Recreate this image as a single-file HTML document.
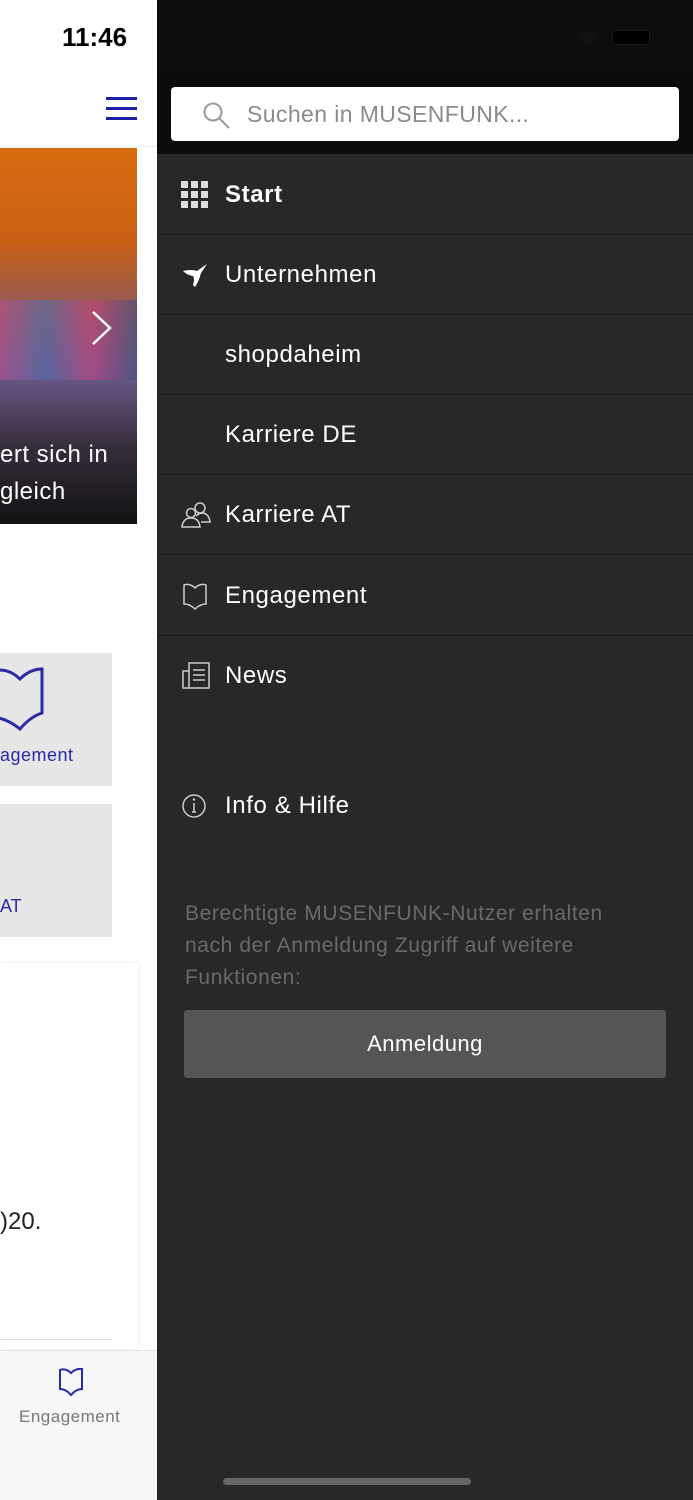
<!DOCTYPE html>
<html><head><meta charset="utf-8"><style>
*{margin:0;padding:0;box-sizing:border-box}
body{width:693px;height:1500px;position:relative;overflow:hidden;font-family:"Liberation Sans",sans-serif;background:#fff}
.a{position:absolute}
.row{position:absolute;left:157px;width:536px;height:80px;border-bottom:1px solid #1a1a1a;color:#fff;font-size:24px;line-height:80px;padding-left:68px;letter-spacing:.6px}
.ic{position:absolute;left:24px;top:26px}
</style></head><body>
<div class="a" style="left:0;top:0;width:157px;height:147px;background:#fff;border-bottom:1px solid #eee"></div>
<div class="a" style="left:62px;top:22px;font-size:26px;font-weight:bold;color:#000">11:46</div>
<div class="a" style="left:106px;top:97px;width:31px;height:3px;background:#1e1ea8;box-shadow:0 10px 0 #1e1ea8,0 20px 0 #1e1ea8"></div>
<div class="a" style="left:0;top:148px;width:137px;height:376px;background:linear-gradient(180deg,#d86a10 0%,#c96015 25%,#8a5a60 45%,#6a5a8a 60%,#3a3040 78%,#111 100%)"></div>
<div class="a" style="left:0;top:300px;width:137px;height:80px;background:linear-gradient(90deg,#c05090,#4a70b0,#d04080,#3a5080);opacity:.55"></div>
<svg class="a" style="left:90px;top:310px" width="24" height="36"><path d="M3 2 L20 18 L3 34" stroke="#fff" stroke-width="2.5" fill="none"/></svg>
<div class="a" style="left:0;top:436px;color:#fff;font-size:24px;line-height:37px;letter-spacing:.5px">ert sich in<br>gleich</div>
<div class="a" style="left:0;top:653px;width:112px;height:133px;background:#e6e6e6"></div>
<svg class="a" style="left:0;top:665px" width="44" height="70"><path d="M-10 8 Q5 0 20 14 Q30 4 42 4 V48 Q30 52 20 64 Q5 52 -10 52" stroke="#2a2aa8" stroke-width="3" fill="none"/></svg>
<div class="a" style="left:0;top:745px;font-size:18px;color:#2a2aa8;letter-spacing:.5px">agement</div>
<div class="a" style="left:0;top:804px;width:112px;height:133px;background:#e6e6e6"></div>
<div class="a" style="left:0;top:896px;font-size:18px;color:#2a2aa8">AT</div>
<div class="a" style="left:0;top:963px;width:138px;height:385px;background:#fff;box-shadow:0 0 4px rgba(0,0,0,.1)"></div>
<div class="a" style="left:0;top:1208px;font-size:24px;color:#222">)20.</div>
<div class="a" style="left:0;top:1339px;width:112px;height:1px;background:#ddd"></div>
<div class="a" style="left:0;top:1350px;width:157px;height:150px;background:#f7f7f7;border-top:1px solid #e5e5e5"></div>
<svg class="a" style="left:58px;top:1367px" width="26" height="30"><path d="M2 3 Q8 1 13 6 Q18 1 24 2 V22 Q18 22 13 28 Q8 22 2 22Z" stroke="#2a2aa8" stroke-width="2" fill="none"/></svg>
<div class="a" style="left:19px;top:1407px;font-size:17px;color:#777;letter-spacing:.5px">Engagement</div>
<div class="a" style="left:157px;top:0;width:536px;height:1500px;background:#282828"></div>
<div class="a" style="left:157px;top:0;width:536px;height:154px;background:#0b0b0b"></div>
<div class="a" style="left:157px;top:0;width:536px;height:75px;background:#0d0d0d"></div>
<div class="a" style="left:612px;top:30px;width:38px;height:15px;border-radius:4px;background:#000;border:1px solid #181818"></div>
<svg class="a" style="left:574px;top:28px" width="28" height="20"><path d="M2 8 Q14 -2 26 8 L14 20Z" fill="#111"/></svg>
<div class="a" style="left:171px;top:87px;width:508px;height:54px;background:#fff;border-radius:4px"></div>
<svg class="a" style="left:202px;top:101px" width="30" height="30"><circle cx="11" cy="11" r="8.5" stroke="#999" stroke-width="2" fill="none"/><path d="M17 17 L27 27" stroke="#999" stroke-width="2"/></svg>
<div class="a" style="left:247px;top:101px;font-size:23px;color:#8a8a8a;letter-spacing:.4px">Suchen in MUSENFUNK...</div>
<div class="row" style="top:155px;font-weight:bold"><svg class="ic" width="28" height="28" style="top:26px"><g fill="#ddd"><rect x="0" y="0" width="7" height="7"/><rect x="10" y="0" width="7" height="7"/><rect x="20" y="0" width="7" height="7"/><rect x="0" y="10" width="7" height="7"/><rect x="10" y="10" width="7" height="7"/><rect x="20" y="10" width="7" height="7"/><rect x="0" y="20" width="7" height="7"/><rect x="10" y="20" width="7" height="7"/><rect x="20" y="20" width="7" height="7"/></g></svg>Start</div>
<div class="row" style="top:235px"><svg class="ic" width="28" height="28"><path d="M2 10 Q10 8 16 10 L26 3 L20 12 Q18 20 14 26 L12 24 Q14 18 12 15 Q6 14 2 10Z" fill="#fff"/></svg>Unternehmen</div>
<div class="row" style="top:315px">shopdaheim</div>
<div class="row" style="top:395px">Karriere DE</div>
<div class="row" style="top:475px"><svg class="ic" width="30" height="28"><g stroke="#ccc" stroke-width="1.5" fill="none"><circle cx="19" cy="7" r="5"/><circle cx="10" cy="12" r="4.5"/><path d="M1 26 Q2 17 10 17 Q18 17 19 26Z"/><path d="M15 15 Q18 12 22 12 Q28 13 29 21 H20"/></g></svg>Karriere AT</div>
<div class="row" style="top:556px"><svg class="ic" width="28" height="28"><path d="M3 3 Q9 1 14 6 Q19 1 25 3 V22 Q19 22 14 27 Q9 22 3 22Z" stroke="#ccc" stroke-width="1.5" fill="none"/></svg>Engagement</div>
<div class="row" style="top:636px;border:none"><svg class="ic" width="30" height="28"><g stroke="#ccc" stroke-width="1.5" fill="none"><rect x="8" y="1" width="20" height="25"/><path d="M8 9 H2 V26 H8 M12 8 H24 M12 13 H24 M12 18 H24"/></g></svg>News</div>
<div class="row" style="top:766px;border:none"><svg class="ic" width="28" height="28"><circle cx="13" cy="14" r="11" stroke="#ccc" stroke-width="1.5" fill="none"/><path d="M13 11 V20 M11 20 H15" stroke="#ccc" stroke-width="1.5"/><circle cx="13" cy="7.5" r="1.2" fill="#ccc"/></svg>Info &amp; Hilfe</div>
<div class="a" style="left:185px;top:898px;width:455px;font-size:21px;line-height:32px;color:#6a6a6a;letter-spacing:.6px">Berechtigte MUSENFUNK-Nutzer erhalten nach der Anmeldung Zugriff auf weitere Funktionen:</div>
<div class="a" style="left:184px;top:1010px;width:482px;height:68px;background:#555;border-radius:3px;color:#fff;font-size:22px;text-align:center;line-height:68px;letter-spacing:.5px">Anmeldung</div>
<div class="a" style="left:223px;top:1478px;width:248px;height:7px;border-radius:4px;background:#666"></div>
</body></html>
